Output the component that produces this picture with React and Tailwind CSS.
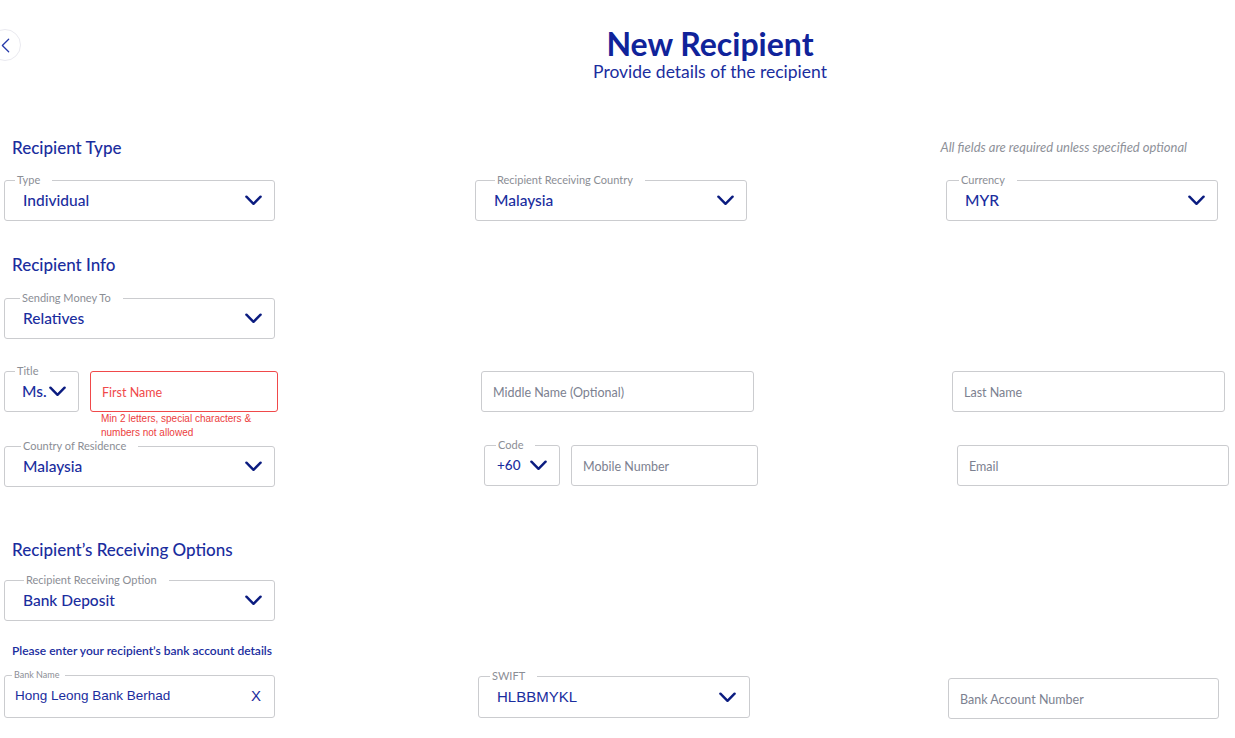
import React from "react";

const Chevron = ({ className = "" }) => (
  <svg viewBox="0 0 18 11" className={`h-[11px] w-[17px] ${className}`} fill="none">
    <path d="M1.5 1.5 L9 9 L16.5 1.5" stroke="#0b1c80" strokeWidth="2.6" strokeLinecap="round" strokeLinejoin="round" />
  </svg>
);

const Legend = ({ children, className = "" }) => (
  <span
    className={`absolute -top-[8px] bg-white pl-[2px] pr-[12px] text-[11px] leading-[14px] text-[#8b8e95] ${className}`}
  >
    {children}
  </span>
);

const SelectBox = ({ label, value, className = "", labelClass = "left-[10px]", valueClass = "pl-[18px]" }) => (
  <div
    className={`relative flex h-[41px] items-center justify-between rounded-[3px] border border-[#cbcccf] pr-[12px] ${className}`}
  >
    <Legend className={labelClass}>{label}</Legend>
    <span className={`text-[15.5px] font-medium text-[#1a2d9e] ${valueClass}`}>{value}</span>
    <Chevron />
  </div>
);

const TextBox = ({ placeholder, className = "", error }) => (
  <div
    className={`flex h-[41px] items-center rounded-[3px] border pl-[11px] pt-[4px] text-[12.5px] ${
      error ? "border-[#f0494a] text-[#f0494a]" : "border-[#cbcccf] text-[#7c8190]"
    } ${className}`}
  >
    {placeholder}
  </div>
);

const SectionTitle = ({ children }) => (
  <h2 className="pl-[12px] text-[17px] font-medium leading-[22px] text-[#1a2d9e]">{children}</h2>
);

export default function App() {
  return (
    <div className="min-h-screen w-[1235px] overflow-hidden bg-white font-['Lato',sans-serif] text-[#1a2d9e]">
      {/* header */}
      <div className="flex items-start">
        <button className="-ml-[11px] mt-[29px] flex h-[32px] w-[32px] shrink-0 items-center justify-start rounded-full border border-[#eaeaf0] bg-white pl-[11px]">
          <svg viewBox="0 0 10 16" className="h-[15px] w-[9px]" fill="none">
            <path d="M8.5 1 L1.5 8 L8.5 15" stroke="#2438a8" strokeWidth="1.4" strokeLinecap="round" strokeLinejoin="round" />
          </svg>
        </button>
        <div className="-ml-[21px] flex-1 pl-[185px] pt-[25px] text-center">
          <h1 className="text-[32px] font-bold leading-[38px] text-[#10239a]">New Recipient</h1>
          <p className="-mt-[1px] text-[17.5px] leading-[20px] text-[#1a2d9e]">Provide details of the recipient</p>
        </div>
      </div>

      {/* recipient type */}
      <div className="mt-[55px] flex items-center justify-between pr-[48px]">
        <SectionTitle>Recipient Type</SectionTitle>
        <span className="text-[13px] italic text-[#8e9199]">All fields are required unless specified optional</span>
      </div>
      <div className="mt-[21px] flex items-start">
        <SelectBox label="Type" value="Individual" className="ml-[4px] w-[271px]" labelClass="left-[10px]" />
        <SelectBox label="Recipient Receiving Country" value="Malaysia" className="ml-[200px] w-[272px]" labelClass="left-[19px]" />
        <SelectBox label="Currency" value="MYR" className="ml-[199px] w-[272px]" labelClass="left-[12px]" />
      </div>

      {/* recipient info */}
      <div className="mt-[33px]">
        <SectionTitle>Recipient Info</SectionTitle>
      </div>
      <div className="mt-[22px] flex">
        <SelectBox label="Sending Money To" value="Relatives" className="ml-[4px] w-[271px]" labelClass="left-[15px]" />
      </div>

      <div className="mt-[32px] flex items-start">
        <SelectBox label="Title" value="Ms." className="ml-[4px] w-[75px]" labelClass="left-[10px]" valueClass="pl-[17px]" />
        <div className="ml-[11px] w-[188px]">
          <TextBox placeholder="First Name" error />
          <p className="pl-[11px] font-['Liberation_Sans',sans-serif] text-[10px] leading-[14px] text-[#ec4040]">
            Min 2 letters, special characters &amp;
            <br />
            numbers not allowed
          </p>
        </div>
        <TextBox placeholder="Middle Name (Optional)" className="ml-[203px] w-[273px]" />
        <TextBox placeholder="Last Name" className="ml-[198px] w-[273px]" />
      </div>

      <div className="mt-[5px] flex items-start">
        <SelectBox label="Country of Residence" value="Malaysia" className="ml-[4px] mt-[1px] w-[271px]" labelClass="left-[16px]" />
        <SelectBox label="Code" value="+60" className="ml-[209px] w-[76px]" labelClass="left-[11px]" valueClass="pl-[12px] !text-[13.5px]" />
        <TextBox placeholder="Mobile Number" className="ml-[11px] w-[187px]" />
        <TextBox placeholder="Email" className="ml-[199px] w-[272px]" />
      </div>

      {/* receiving options */}
      <div className="mt-[52px]">
        <SectionTitle>Recipient’s Receiving Options</SectionTitle>
      </div>
      <div className="mt-[19px] flex">
        <SelectBox label="Recipient Receiving Option" value="Bank Deposit" className="ml-[4px] w-[271px]" labelClass="left-[19px]" />
      </div>
      <p className="mt-[21px] pl-[12px] text-[12px] font-semibold leading-[18px] text-[#1a2d9e]">
        Please enter your recipient’s bank account details
      </p>
      <div className="mt-[15px] flex items-start">
        <div className="relative ml-[4px] flex h-[43px] w-[271px] items-center justify-between rounded-[3px] border border-[#cbcccf] pl-[10px] pr-[13px] font-['Liberation_Sans',sans-serif] text-[13.5px] text-[#1a2d9e]">
          <span className="absolute -top-[7px] left-[7px] bg-white pl-[2px] pr-[6px] font-['Lato',sans-serif] text-[9px] leading-[12px] text-[#8b8e95]">
            Bank Name
          </span>
          <span>Hong Leong Bank Berhad</span>
          <span className="text-[15px]">X</span>
        </div>
        <div className="relative ml-[203px] mt-[1px] flex h-[42px] w-[272px] items-center justify-between rounded-[3px] border border-[#cbcccf] pl-[18px] pr-[13px]">
          <Legend className="left-[11px]">SWIFT</Legend>
          <span className="font-['Liberation_Sans',sans-serif] text-[15px] text-[#1a2d9e]">HLBBMYKL</span>
          <Chevron />
        </div>
        <TextBox placeholder="Bank Account Number" className="ml-[198px] mt-[3px] w-[271px]" />
      </div>
    </div>
  );
}
